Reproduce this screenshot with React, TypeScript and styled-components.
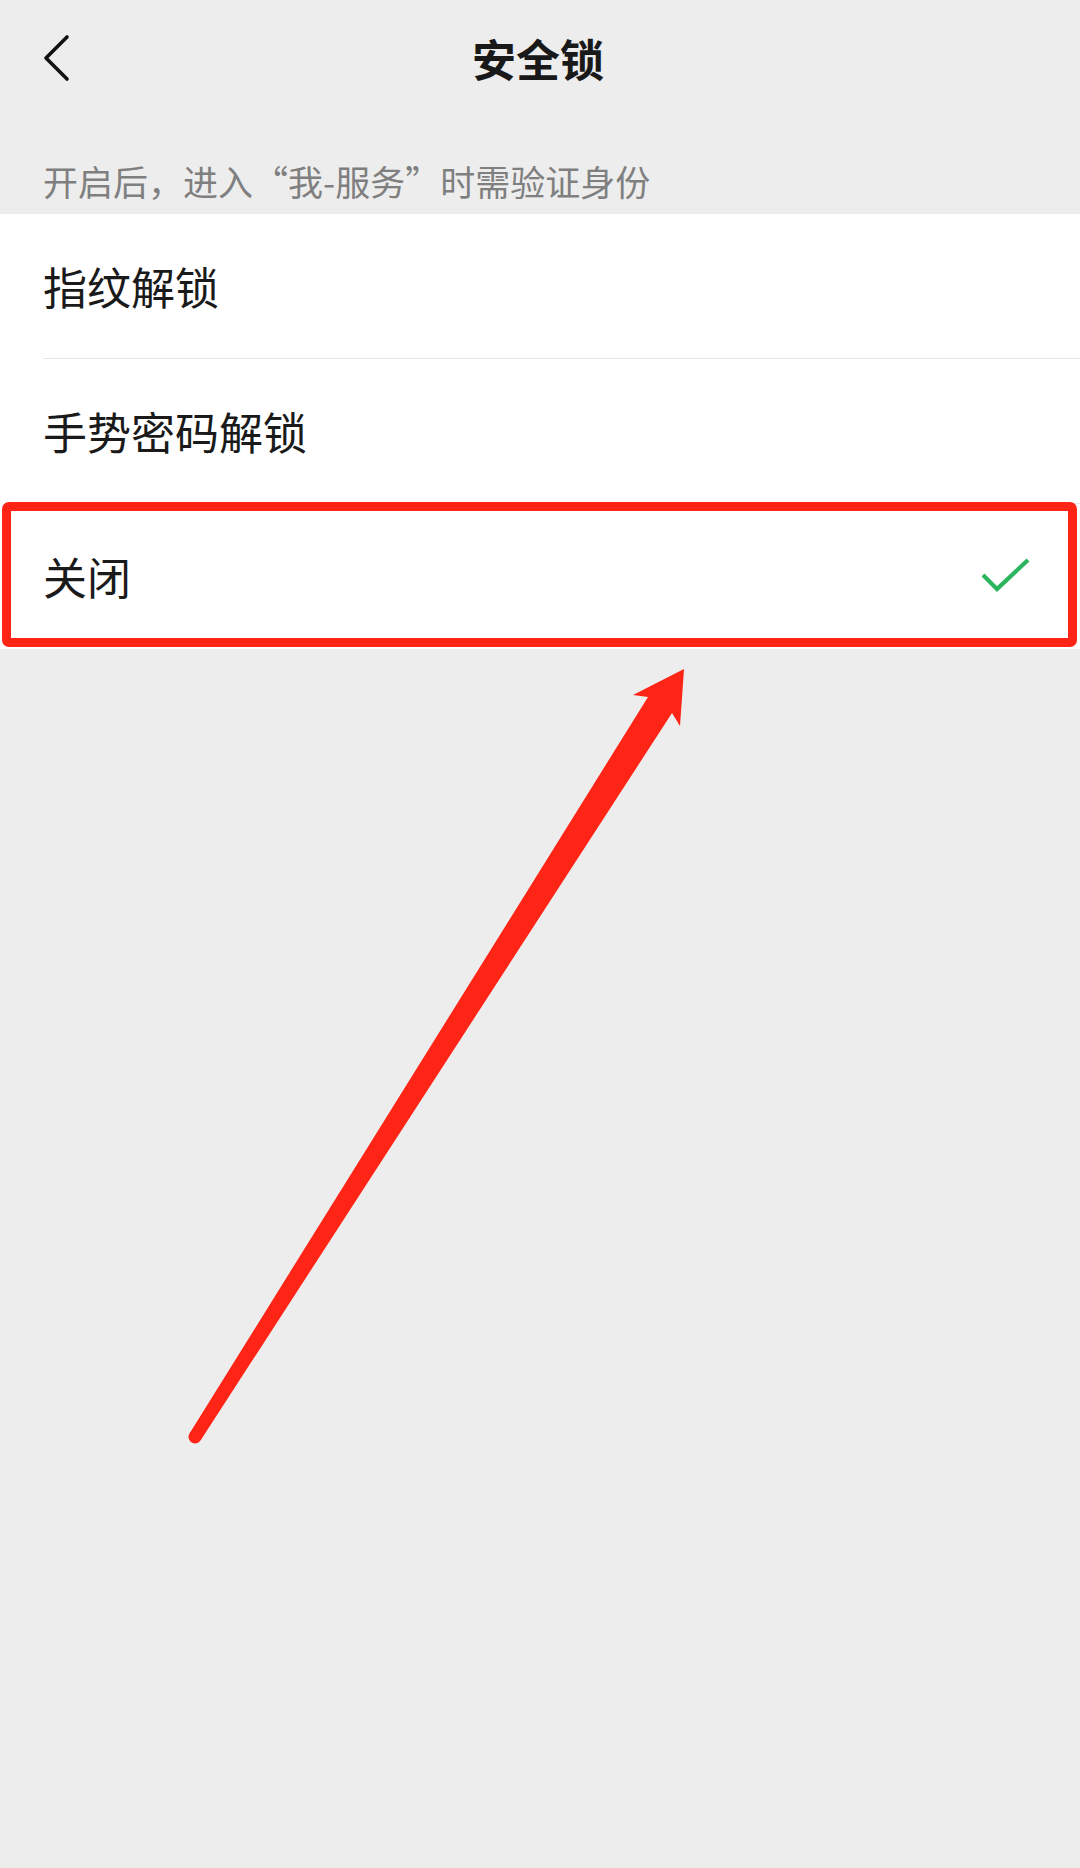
import React from 'react';
import styled, { createGlobalStyle } from 'styled-components';

const GlobalStyle = createGlobalStyle`
  html, body {
    margin: 0;
    padding: 0;
    background: #ededed;
  }

  body {
    font-family: "Noto Sans CJK SC", "Noto Sans", sans-serif;
    -webkit-font-smoothing: antialiased;
  }
`;

interface Option {
  label: string;
  checked?: boolean;
  highlighted?: boolean;
}

const options: Option[] = [
  { label: '指纹解锁' },
  { label: '手势密码解锁' },
  { label: '关闭', checked: true, highlighted: true },
];

const BackIc = () => (
  <svg width="28" height="48" viewBox="0 0 28 48" fill="none">
    <path d="M25 3 L4 24 L25 45" stroke="#111" strokeWidth="3.6" strokeLinecap="round" strokeLinejoin="round" />
  </svg>
);

const CheckIc = () => (
  <svg width="50" height="38" viewBox="0 0 50 38" fill="none">
    <path d="M3 18 L17 32 L48 3" stroke="#2bb55f" strokeWidth="4.2" />
  </svg>
);

const App = () => (
  <>
    <GlobalStyle />
    <Page>
      <NavBar>
        <BackButton>
          <BackIc />
        </BackButton>
        <Title>安全锁</Title>
        <span />
      </NavBar>

      <Tip>开启后，进入“我-服务”时需验证身份</Tip>

      <List>
        {options.map((option, i) => (
          <Row key={option.label}>
            <RowBody divider={i < options.length - 1}>
              <Label>{option.label}</Label>
              {option.checked && <CheckIc />}
            </RowBody>
            {option.highlighted && <Highlight />}
          </Row>
        ))}
      </List>

      <Annotation width="1080" height="1868" viewBox="0 0 1080 1868">
        <polygon
          points="684,669 680,726 672,713 200.5,1440.5 189.5,1433.5 648,697 633,695"
          fill="#fe2416"
        />
        <circle cx="195" cy="1437" r="6.5" fill="#fe2416" />
      </Annotation>
    </Page>
  </>
);

const Page = styled.div`
  position: relative;
  width: 1080px;
  min-height: 1868px;
  background: #ededed;
  overflow: hidden;
`;

const NavBar = styled.div`
  display: grid;
  grid-template-columns: 1fr auto 1fr;
  align-items: center;
  height: 116px;
`;

const BackButton = styled.div`
  display: flex;
  align-items: center;
  padding-left: 42px;
`;

const Title = styled.h1`
  margin: 0;
  font-size: 44px;
  font-weight: 600;
  line-height: 1;
  color: #191919;
  transform: translateX(-2px);
`;

const Tip = styled.div`
  padding: 41px 43px 9px;
  font-size: 35px;
  line-height: 48px;
  color: #7f7f7f;
`;

const List = styled.div`
  display: flex;
  flex-direction: column;
  background: #fff;
`;

const Row = styled.div`
  position: relative;
  padding-left: 43px;
`;

const RowBody = styled.div<{ divider?: boolean }>`
  display: flex;
  align-items: center;
  justify-content: space-between;
  height: 144px;
  padding-right: 50px;
  border-bottom: 1px solid ${({ divider }) => (divider ? '#e6e6e6' : 'transparent')};
`;

const Label = styled.span`
  font-size: 44px;
  line-height: 1;
  color: #1a1a1a;
`;

const Highlight = styled.div`
  position: absolute;
  top: -2px;
  bottom: 2px;
  left: 2px;
  right: 3px;
  border: 9px solid #fe2416;
  border-radius: 7px;
  pointer-events: none;
`;

const Annotation = styled.svg`
  position: absolute;
  top: 0;
  left: 0;
  pointer-events: none;
`;

export default App;
